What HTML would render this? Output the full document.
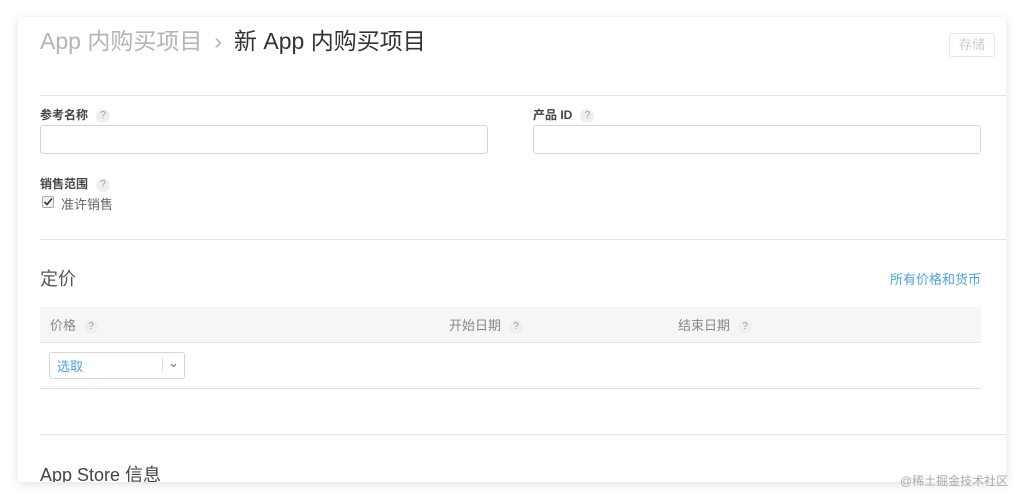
<!DOCTYPE html>
<html><head><meta charset="utf-8"><style>
body{margin:0;width:1024px;height:501px;background:#fff;overflow:hidden;font-family:"Liberation Sans","Noto Sans CJK SC",sans-serif;position:relative}
.card{position:absolute;left:18px;top:17px;width:988px;height:465px;background:#fff;box-shadow:0 2px 10px rgba(0,0,0,.12);overflow:hidden}
.a{position:absolute;white-space:nowrap}
.hr{position:absolute;height:1px;background:#e3e3e3}
.q{display:inline-block;width:14px;height:14px;border-radius:7px;background:#efefef;color:#999;font-size:10px;line-height:14px;text-align:center;font-weight:normal;vertical-align:1px;margin-left:8px}
.lbl{font-size:12px;font-weight:bold;color:#444}
.inp{position:absolute;height:29px;border:1px solid #d6d6d6;border-radius:3px;box-sizing:border-box}
</style></head><body>
<div class="card">
<div class="a" style="left:22px;top:5px;font-size:23px;color:#b4b4b4">App 内购买项目<span style="margin:0 12px 0 12px">›</span><span style="color:#333">新 App 内购买项目</span></div>
<div class="a" style="left:931px;top:16px;width:46px;height:24px;border:1px solid #e6e6e6;border-radius:3px;box-sizing:border-box;color:#ccc;font-size:13px;line-height:22px;text-align:center">存储</div>
<div class="hr" style="left:22px;top:78px;width:966px"></div>
<div class="a lbl" style="left:22px;top:89px">参考名称<span class="q">?</span></div>
<div class="inp" style="left:22px;top:108px;width:448px"></div>
<div class="a lbl" style="left:515px;top:89px">产品 ID<span class="q">?</span></div>
<div class="inp" style="left:515px;top:108px;width:448px"></div>
<div class="a lbl" style="left:22px;top:158px">销售范围<span class="q">?</span></div>
<div class="a" style="left:24px;top:179px;width:12px;height:12px;border:1px solid #aaa;border-radius:2px;background:#eef3f8;box-sizing:border-box"><svg width="12" height="12" style="position:absolute;left:-1px;top:-1px"><path d="M2.5 6 L5 8.5 L10 2.5" stroke="#333" stroke-width="1.6" fill="none"/></svg></div>
<div class="a" style="left:43px;top:177px;font-size:13px;color:#666">准许销售</div>
<div class="hr" style="left:22px;top:222px;width:966px"></div>
<div class="a" style="left:22px;top:248px;font-size:18px;color:#555">定价</div>
<div class="a" style="right:25px;top:252px;font-size:13px;color:#4ba4e0">所有价格和货币</div>
<div class="a" style="left:22px;top:290px;width:941px;height:35px;background:#f6f6f6;border-bottom:1px solid #e6e6e6"></div>
<div class="a" style="left:32px;top:298px;font-size:13px;color:#888">价格<span class="q">?</span></div>
<div class="a" style="left:431px;top:298px;font-size:13px;color:#888">开始日期<span class="q">?</span></div>
<div class="a" style="left:660px;top:298px;font-size:13px;color:#888">结束日期<span class="q">?</span></div>
<div class="inp" style="left:31px;top:335px;width:136px;height:27px"></div>
<div class="a" style="left:39px;top:339px;font-size:13px;color:#4ba4e0">选取</div>
<div class="a" style="left:144px;top:341px;width:1px;height:15px;background:#e0e0e0"></div>
<svg class="a" style="left:152px;top:346px" width="7" height="5"><path d="M1 1 L3.5 3.5 L6 1" stroke="#666" stroke-width="1" fill="none"/></svg>
<div class="hr" style="left:22px;top:371px;width:941px"></div>
<div class="hr" style="left:22px;top:417px;width:966px"></div>
<div class="a" style="left:22px;top:444px;font-size:18px;color:#444">App Store 信息</div>
</div>
<div class="a" style="left:900px;top:472px;font-size:12px;color:#aaa">@稀土掘金技术社区</div>
</body></html>
